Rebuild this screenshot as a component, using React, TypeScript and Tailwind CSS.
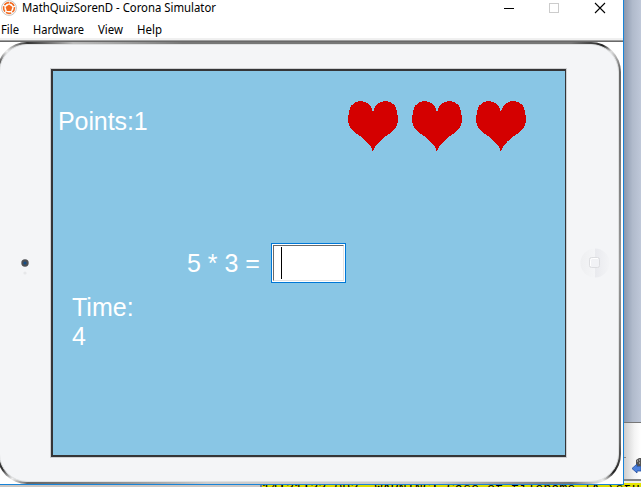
function AppIcon() {
  return (
    <svg width="16" height="16" viewBox="0 0 16 16" className="shrink-0">
      <circle cx="8" cy="8" r="7.4" fill="#fff" stroke="#b9b3ae" strokeWidth="0.8" />
      <circle cx="8" cy="8" r="5.4" fill="none" stroke="#f36b21" strokeWidth="1.6" strokeDasharray="5.6 1.18" strokeDashoffset="-0.6" transform="rotate(-90 8 8)" />
      <path d="M8 4.6 11.4 7.1 10.1 11H5.9L4.6 7.1Z" fill="#f36b21" />
    </svg>
  );
}

function TitleBar() {
  return (
    <div className="flex h-[18px] shrink-0 items-start pl-[1px] text-[12px] leading-[16px] text-black">
      <AppIcon />
      <span className="ml-[5px] w-[194px] whitespace-nowrap">
        <svg width="200" height="18" className="block overflow-visible">
          <text x="0" y="12" fontSize="12" textLength="194" lengthAdjust="spacingAndGlyphs">MathQuizSorenD - Corona Simulator</text>
        </svg>
      </span>
      <svg width="104" height="16" viewBox="0 0 104 16" className="ml-auto mr-[17px]" fill="none" shapeRendering="crispEdges">
        <path d="M2 8.5H12" stroke="#000" />
        <rect x="47.5" y="3.5" width="9" height="9" stroke="#ccc" />
        <path d="M93 3 103 13M103 3 93 13" stroke="#000" strokeWidth="1.1" shapeRendering="auto" />
      </svg>
    </div>
  );
}

function MenuItem({ label, width, gap }: { label: string; width: number; gap: string }) {
  return (
    <svg width={width} height="20" className={"block shrink-0 overflow-visible " + gap}>
      <text x="0" y="16" fontSize="12" textLength={width} lengthAdjust="spacingAndGlyphs">{label}</text>
    </svg>
  );
}

function Heart() {
  return (
    <svg width="50" height="50" viewBox="0 0 50 50" shapeRendering="crispEdges">
      <path d="M24.5 49.5C24 45 17 39 13 35.5C4 31 0 26 0 18C0 6 5 0 12 0C19 0 24 5 25 11C26 5 31 0 38 0C45 0 50 6 50 18C50 26 46 31 37 35.5C33 39 26 45 25.5 49.5Z" fill="#d40000" />
    </svg>
  );
}

function GameScreen() {
  return (
    <div className="flex h-[388px] w-[515px] flex-col border-2 border-r border-[#353537] bg-[#89c6e5] font-['Liberation_Sans',Arial,sans-serif] text-[25px] leading-[29px] text-white shadow-[0_0_0_1px_#cfd0d2]">
      <div className="flex h-[172px] pt-[30px]">
        <div className="pl-[5px] pt-[6px] tracking-[-0.1px]">Points:1</div>
        <div className="ml-auto mr-[39px] flex gap-[14px]">
          <Heart />
          <Heart />
          <Heart />
        </div>
      </div>
      <div className="flex h-[50px] pl-[134px]">
        <div className="w-[84px] whitespace-nowrap pt-[6px]">5 * 3 =</div>
        <div className="h-[40px] w-[75px] border border-[#0078d7] bg-white p-px">
          <div className="h-full border border-b-[#e3e3e3] border-l-[#696969] border-r-[#e3e3e3] border-t-[#696969] pl-[7px] pt-[1px]">
            <div className="h-[32px] w-px bg-black" />
          </div>
        </div>
      </div>
      <div className="pl-[19px]">
        <div>Time:</div>
        <div>4</div>
      </div>
    </div>
  );
}

function HomeButton() {
  return (
    <svg width="30" height="30" viewBox="0 0 30 30">
      <defs>
        <linearGradient id="home">
          <stop offset="0" stopColor="#eeeff1" />
          <stop offset="0.5" stopColor="#f4f5f7" />
          <stop offset="0.51" stopColor="#e9eaee" />
          <stop offset="1" stopColor="#f3f4f6" />
        </linearGradient>
      </defs>
      <circle cx="15" cy="15" r="14.5" fill="url(#home)" />
      <rect x="9.5" y="9.5" width="10" height="10" rx="2" fill="#f1f2f5" stroke="#dcdde0" strokeWidth="1" />
      <path d="M10.5 18V12.5Q10.5 10.5 12.5 10.5H18" fill="none" stroke="#fff" />
    </svg>
  );
}

function Device() {
  return (
    <div className="ml-[-3px] h-[442px] w-[624px] shrink-0 rounded-[30px] bg-[conic-gradient(from_0deg,#777_0deg,#777_50deg,#222_53.5deg,#ddd_55deg,#666_58deg,#999_90deg,#666_120deg,#222_124.5deg,#eee_126.5deg,#777_130deg,#ccc_150deg,#ccc_205deg,#666_232deg,#eee_234deg,#333_236deg,#aaa_270deg,#555_303deg,#eee_305deg,#333_308deg,#bbb_313deg,#777_330deg)] p-[2px]">
      <div className="flex h-full rounded-[28px] border border-[#dfe1e2] bg-[#f4f5f7]">
        <div className="flex w-[51px] shrink-0 flex-col items-center pr-[2px] pt-[213px]">
          <svg width="10" height="18" viewBox="0 0 10 18">
            <circle cx="5" cy="5" r="3.7" fill="#4d5054" />
            <circle cx="5" cy="5" r="1.6" fill="#154e88" />
            <circle cx="5" cy="15" r="1.6" fill="#e6e7e9" />
          </svg>
        </div>
        <div className="pt-[24px]">
          <GameScreen />
        </div>
        <div className="ml-[14px] pt-[203px]">
          <HomeButton />
        </div>
      </div>
    </div>
  );
}

function Simulator() {
  return (
    <div className="flex h-[485px] w-[624px] shrink-0 flex-col overflow-hidden border-b border-r border-[#1883d7] bg-white">
      <TitleBar />
      <div className="flex h-[20px] shrink-0 pl-[1px] text-black">
        <MenuItem label="File" width={18} gap="" />
        <MenuItem label="Hardware" width={51} gap="ml-[14px]" />
        <MenuItem label="View" width={25} gap="ml-[14px]" />
        <MenuItem label="Help" width={25} gap="ml-[14px]" />
      </div>
      <div className="h-[2px] shrink-0 bg-[#f0f0f0]" />
      <div className="h-[2px] shrink-0 border-b border-[#696969] bg-[#a0a0a0]" />
      <Device />
    </div>
  );
}

function BackgroundWindow() {
  return (
    <div className="flex h-[485px] w-[17px] flex-col">
      <div className="h-[422px] bg-[linear-gradient(90deg,#8b98ae,#b0bacb_50%,#bfc8d9)]" />
      <div className="flex h-[57px] flex-col border-t border-[#777] bg-[linear-gradient(90deg,#cecece,#f3f3f3_60%,#fff)]">
        <div className="mt-[34px] h-px w-[2px] bg-[#888]" />
        <svg width="9" height="18" viewBox="0 0 9 18" className="ml-auto">
          <path d="M4 8V2L7 0H9V8Z" fill="#555" />
          <path d="M5 3H6M7 5H8M7 2H8" stroke="#ddd" />
          <path d="M0 10.5 5 6V8.5H9V13H5V15Z" fill="#4d82df" stroke="#244e9c" strokeWidth="0.8" />
        </svg>
      </div>
      <div className="h-[2px] bg-[#858585]" />
      <div className="h-[2px] bg-[#eee]" />
      <div className="h-[2px] bg-[#e6e600]" />
    </div>
  );
}

export default function App() {
  return (
    <div className="h-[487px] w-[641px] overflow-hidden bg-[#d0cdca] font-['Noto_Sans','Open_Sans',sans-serif]">
      <div className="flex">
        <Simulator />
        <BackgroundWindow />
      </div>
      <div className="flex h-[2px]">
        <div className="w-[262px] border-r-2 border-[#777e8c] bg-[#cbc7c4]" />
        <div className="h-[2px] flex-1 overflow-hidden bg-[#dcdc00]">
          <div className="mt-[-3px] whitespace-pre font-['Liberation_Mono',monospace] text-[13.4px] leading-[14px] text-black">{"14:31:33.093  WARNING: Case of filename 'A.\\stu"}</div>
        </div>
      </div>
    </div>
  );
}
